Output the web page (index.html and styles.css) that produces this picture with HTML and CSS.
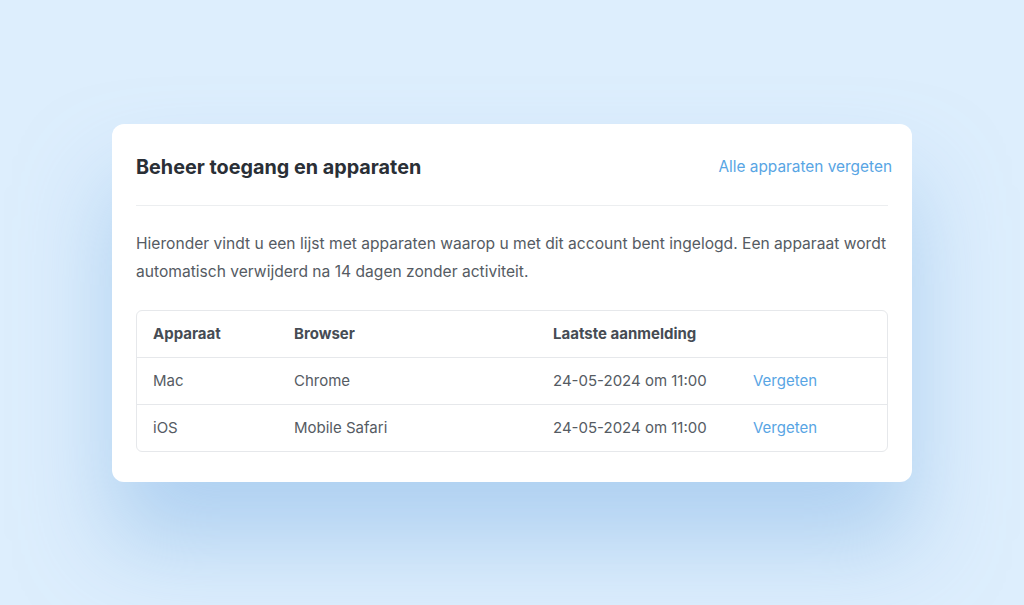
FILE: index.html
```html
<!DOCTYPE html>
<html lang="nl">
<head>
    <meta charset="UTF-8">
    <meta name="viewport" content="width=device-width, initial-scale=1.0">
    <title>Beheer toegang en apparaten</title>
    <link rel="stylesheet" href="styles.css">
</head>
<body>
    <!-- Devices card -->
    <section class="card">
        <div class="card-header">
            <h1>Beheer toegang en apparaten</h1>
            <a href="#" class="link forget-all">Alle apparaten vergeten</a>
        </div>

        <p class="intro">Hieronder vindt u een lijst met apparaten waarop u met dit account bent ingelogd. Een apparaat wordt automatisch verwijderd na 14 dagen zonder activiteit.</p>

        <table class="devices">
            <thead>
                <tr>
                    <th class="col-device">Apparaat</th>
                    <th class="col-browser">Browser</th>
                    <th class="col-login">Laatste aanmelding</th>
                    <th></th>
                </tr>
            </thead>
            <tbody>
                <tr>
                    <td>Mac</td>
                    <td>Chrome</td>
                    <td>24-05-2024 om 11:00</td>
                    <td><a href="#" class="link">Vergeten</a></td>
                </tr>
                <tr>
                    <td>iOS</td>
                    <td>Mobile Safari</td>
                    <td>24-05-2024 om 11:00</td>
                    <td><a href="#" class="link">Vergeten</a></td>
                </tr>
            </tbody>
        </table>
    </section>
</body>
</html>
```

FILE: styles.css
```css
body {
    font-family: "Inter", "Liberation Sans", sans-serif;
    background-color: #ddeefd;
    color: #555b63;
    margin: 0;
    padding: 0;
    height: 100vh;
    display: flex;
    justify-content: center;
    align-items: center;
}

.card {
    background-color: #ffffff;
    width: 800px;
    box-sizing: border-box;
    padding: 24px 24px 30px 24px;
    border-radius: 12px;
    box-shadow: 0 60px 90px rgba(130, 180, 230, 0.5);
}

.card-header {
    display: flex;
    justify-content: space-between;
    align-items: center;
    height: 38px;
    padding-bottom: 19px;
    border-bottom: 1px solid #eceef0;
}

h1 {
    margin: 0;
    font-size: 19.8px;
    font-weight: 700;
    color: #2a2f36;
}

.link {
    color: #58a5e4;
    text-decoration: none;
}

.forget-all {
    font-size: 15.4px;
    margin-right: -4px;
}

.intro {
    margin: 24px 0 24px 0;
    font-size: 15.6px;
    line-height: 28px;
}

/* Table */
.devices {
    width: 100%;
    border-collapse: separate;
    border-spacing: 0;
    border: 1px solid #e6e8eb;
    border-radius: 6px;
    font-size: 15px;
}

.devices th,
.devices td {
    height: 46px;
    padding: 0;
    text-align: left;
    vertical-align: middle;
}

.devices th {
    font-weight: 700;
    color: #464c54;
}

.devices td {
    border-top: 1px solid #e6e8eb;
}

.devices th:first-child,
.devices td:first-child {
    padding-left: 16px;
}

.col-device {
    width: 141px;
}

.col-browser {
    width: 259px;
}

.col-login {
    width: 200px;
}
```
